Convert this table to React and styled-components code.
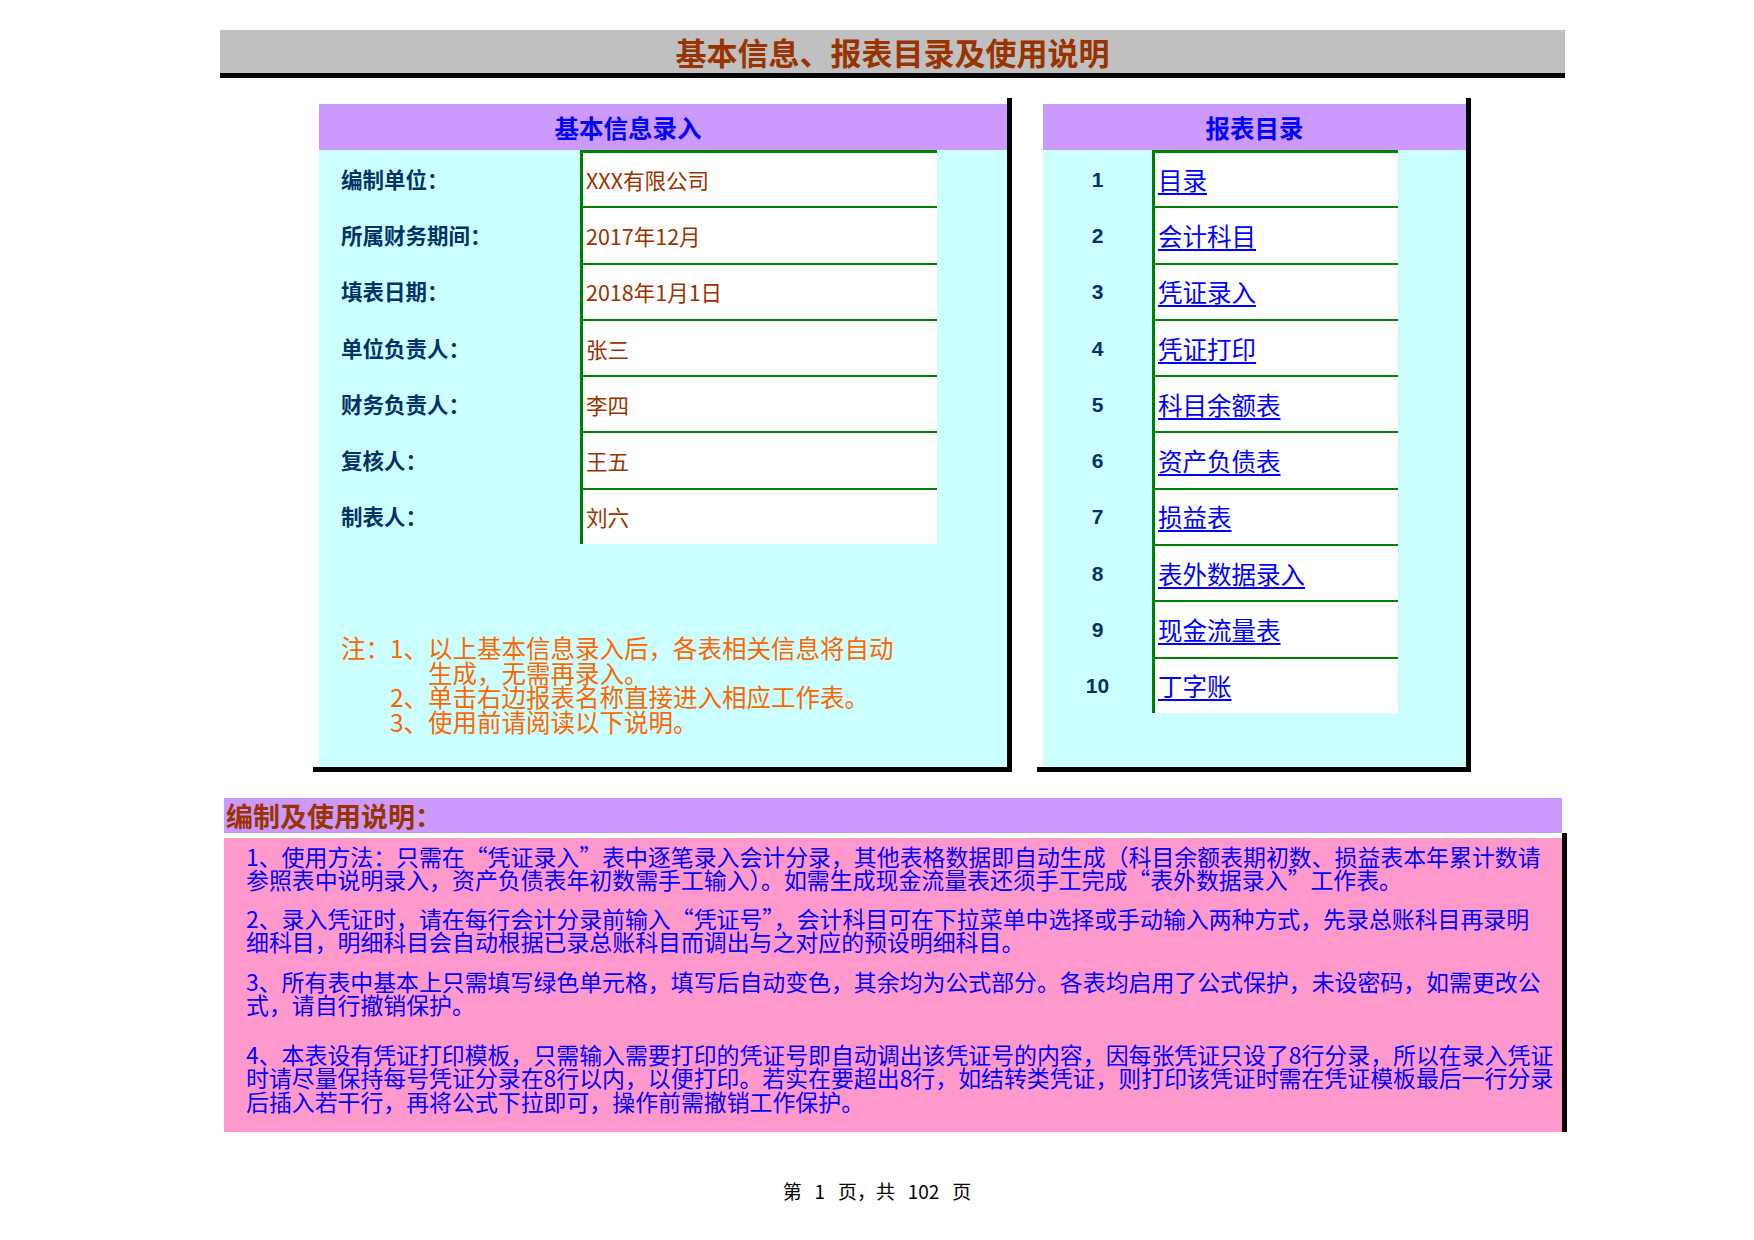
import React from 'react';
import styled, { createGlobalStyle } from 'styled-components';

const GlobalStyle = createGlobalStyle`
  html, body {
    margin: 0;
    padding: 0;
    background: #fff;
  }
  body {
    font-family: 'Noto Sans CJK SC', 'Noto Sans', sans-serif;
  }
`;

const infoRows = [
  ['编制单位：', 'XXX有限公司'],
  ['所属财务期间：', '2017年12月'],
  ['填表日期：', '2018年1月1日'],
  ['单位负责人：', '张三'],
  ['财务负责人：', '李四'],
  ['复核人：', '王五'],
  ['制表人：', '刘六'],
];

const reports = [
  '目录',
  '会计科目',
  '凭证录入',
  '凭证打印',
  '科目余额表',
  '资产负债表',
  '损益表',
  '表外数据录入',
  '现金流量表',
  '丁字账',
];

const guide = [
  {
    gap: 15,
    lines: [
      '1、使用方法：只需在“凭证录入”表中逐笔录入会计分录，其他表格数据即自动生成（科目余额表期初数、损益表本年累计数请',
      '参照表中说明录入，资产负债表年初数需手工输入）。如需生成现金流量表还须手工完成“表外数据录入”工作表。',
    ],
  },
  {
    gap: 16,
    lines: [
      '2、录入凭证时，请在每行会计分录前输入“凭证号”，会计科目可在下拉菜单中选择或手动输入两种方式，先录总账科目再录明',
      '细科目，明细科目会自动根据已录总账科目而调出与之对应的预设明细科目。',
    ],
  },
  {
    gap: 26,
    lines: [
      '3、所有表中基本上只需填写绿色单元格，填写后自动变色，其余均为公式部分。各表均启用了公式保护，未设密码，如需更改公',
      '式，请自行撤销保护。',
    ],
  },
  {
    gap: 0,
    lines: [
      '4、本表设有凭证打印模板，只需输入需要打印的凭证号即自动调出该凭证号的内容，因每张凭证只设了8行分录，所以在录入凭证',
      '时请尽量保持每号凭证分录在8行以内，以便打印。若实在要超出8行，如结转类凭证，则打印该凭证时需在凭证模板最后一行分录',
      '后插入若干行，再将公式下拉即可，操作前需撤销工作保护。',
    ],
  },
];

const App = () => {
  return (
    <>
      <GlobalStyle />
      <Page>
        <TitleBar>基本信息、报表目录及使用说明</TitleBar>

        <PanelsRow>
          {/* basic info */}
          <Panel $width={688}>
            <PanelHeader $padRight={70}>基本信息录入</PanelHeader>
            <PanelBody>
              {infoRows.map(([label, value], i) => (
                <Row key={label} $cols='261px 357px 70px'>
                  <Label>{label}</Label>
                  <WhiteCell $first={i === 0}>
                    <Value>{value}</Value>
                  </WhiteCell>
                </Row>
              ))}
              <Note>
                <NoteLine>注：1、以上基本信息录入后，各表相关信息将自动</NoteLine>
                <NoteLine $indent='3.55em'>生成，无需再录入。</NoteLine>
                <NoteLine $indent='2em'>2、单击右边报表名称直接进入相应工作表。</NoteLine>
                <NoteLine $indent='2em'>3、使用前请阅读以下说明。</NoteLine>
              </Note>
            </PanelBody>
          </Panel>

          {/* report index */}
          <Panel $width={423}>
            <PanelHeader $padRight={0}>报表目录</PanelHeader>
            <PanelBody $padBottom={54}>
              {reports.map((name, i) => (
                <Row key={name} $cols='109px 246px 68px'>
                  <Num>{i + 1}</Num>
                  <WhiteCell $first={i === 0}>
                    <ReportLink href='#' onClick={(e) => e.preventDefault()}>
                      {name}
                    </ReportLink>
                  </WhiteCell>
                </Row>
              ))}
            </PanelBody>
          </Panel>
        </PanelsRow>

        <Guide>
          <GuideTitle>编制及使用说明：</GuideTitle>
          <GuideFrame>
            <GuideBody>
              {guide.map((p, i) => (
                <GuidePara key={i} $gap={p.gap}>
                  {p.lines.map((l) => (
                    <span key={l}>{l}</span>
                  ))}
                </GuidePara>
              ))}
            </GuideBody>
          </GuideFrame>
        </Guide>
      </Page>
      <Footer>第 1 页，共 102 页</Footer>
    </>
  );
};

const Page = styled.div`
  margin-left: 220px;
  padding-top: 30px;
  width: 1347px;
`;

const TitleBar = styled.div`
  width: 1345px;
  height: 43px;
  background: #c0c0c0;
  border-bottom: 5px solid #000;
  display: flex;
  align-items: center;
  justify-content: center;
  color: #993300;
  font-size: 31px;
  font-weight: 700;
`;

const PanelsRow = styled.div`
  display: flex;
  align-items: stretch;
  gap: 25px;
  margin: 20px 0 0 93px;
`;

const Panel = styled.div`
  display: flex;
  flex-direction: column;
  width: ${(p) => p.$width}px;
  padding: 6px 0 0 6px;
  border-right: 5px solid #000;
  border-bottom: 5px solid #000;
`;

const PanelHeader = styled.div`
  height: 46px;
  background: #cc99ff;
  display: flex;
  align-items: center;
  justify-content: center;
  padding-right: ${(p) => p.$padRight}px;
  color: #0000ff;
  font-size: 24.5px;
  font-weight: 700;
`;

const PanelBody = styled.div`
  flex: 1;
  background: #ccffff;
  padding-bottom: ${(p) => p.$padBottom || 0}px;
`;

const Row = styled.div`
  display: grid;
  grid-template-columns: ${(p) => p.$cols};
  height: 56.3px;
`;

const Label = styled.div`
  display: flex;
  align-items: center;
  padding-left: 22px;
  color: #003366;
  font-size: 21.5px;
  font-weight: 700;
`;

const Num = styled.div`
  display: flex;
  align-items: center;
  justify-content: center;
  padding-top: 3px;
  color: #003366;
  font-family: 'Liberation Sans', Arial, sans-serif;
  font-size: 21px;
  font-weight: 700;
`;

const WhiteCell = styled.div`
  box-sizing: border-box;
  display: flex;
  align-items: center;
  padding-left: 3px;
  background: #fff;
  border-left: 3px solid #008000;
  border-top: ${(p) => (p.$first ? 3 : 2)}px solid #008000;
`;

const Value = styled.span`
  color: #993300;
  font-size: 21.5px;
`;

const ReportLink = styled.a`
  color: #0000ff;
  font-size: 24.5px;
  text-decoration: underline;
  text-underline-offset: 3px;
`;

const Note = styled.div`
  margin-top: 92px;
  padding: 0 0 30px 22px;
  color: #ff6600;
  font-size: 24.5px;
`;

const NoteLine = styled.div`
  line-height: 24.7px;
  white-space: nowrap;
  padding-left: ${(p) => p.$indent || 0};
`;

const Guide = styled.section`
  margin: 26px 0 0 4px;
  width: 1343px;
`;

const GuideTitle = styled.div`
  width: 1338px;
  height: 35px;
  background: #cc99ff;
  display: flex;
  align-items: center;
  padding-left: 2px;
  box-sizing: border-box;
  color: #993300;
  font-size: 27px;
  font-weight: 700;
`;

const GuideFrame = styled.div`
  padding-top: 5px;
  border-right: 5px solid #000;
`;

const GuideBody = styled.div`
  background: #ff99cc;
  padding: 7px 0 19px 22px;
  color: #0000ff;
  font-size: 22.9px;
`;

const GuidePara = styled.div`
  margin-bottom: ${(p) => p.$gap}px;
  span {
    display: block;
    line-height: 23.5px;
    white-space: nowrap;
  }
`;

const Footer = styled.div`
  margin-top: 47px;
  text-align: center;
  color: #000;
  font-size: 19px;
  line-height: 24px;
  word-spacing: 0.45em;
`;

export default App;
